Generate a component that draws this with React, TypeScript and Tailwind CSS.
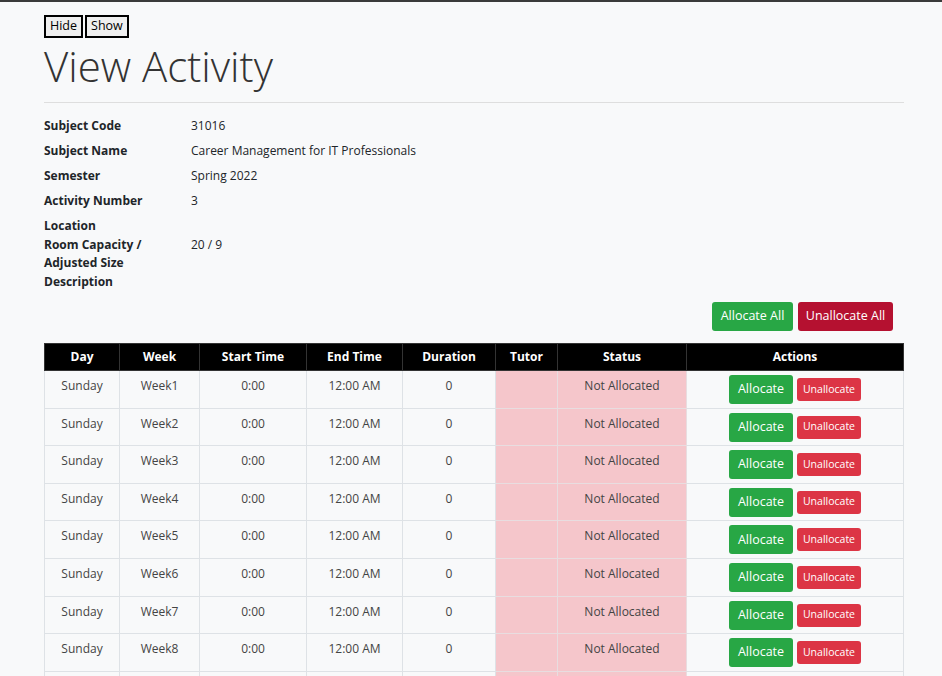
import React from 'react';

const info: [string, string][] = [
  ['Subject Code', '31016'],
  ['Subject Name', 'Career Management for IT Professionals'],
  ['Semester', 'Spring 2022'],
  ['Activity Number', '3'],
];

const cols = [
  { label: 'Day', w: 'w-[75px]' },
  { label: 'Week', w: 'w-[80px]' },
  { label: 'Start Time', w: 'w-[107px]' },
  { label: 'End Time', w: 'w-[96px]' },
  { label: 'Duration', w: 'w-[93px]' },
  { label: 'Tutor', w: 'w-[62px]' },
  { label: 'Status', w: 'w-[129px]' },
  { label: 'Actions', w: '' },
];

const weeks = [1, 2, 3, 4, 5, 6, 7, 8, 9];

export default function App() {
  return (
    <div className="min-h-[676px] border-t-2 border-[#3a3a3a] bg-[#f8f9fa] font-['Open_Sans',sans-serif] text-[12px] text-[#212529]">
      <div className="ml-[44px] w-[860px] pt-[13px]">
        <div className="flex gap-[2px]">
          <button className="h-[23px] border-2 border-black bg-[#efefef] px-[4px] text-[12.5px] leading-none text-black">Hide</button>
          <button className="h-[23px] border-2 border-black bg-[#efefef] px-[4px] text-[12.5px] leading-none text-black">Show</button>
        </div>
        <h1 className="mt-[2px] text-[42px] font-light leading-[52px] text-[#333]">View Activity</h1>
        <hr className="mt-[10px] border-t border-[#dedede]" />

        {/* subject details */}
        <div className="mt-[14px] grid grid-cols-[147px_1fr]">
          {info.map(([k, v]) => (
            <React.Fragment key={k}>
              <div className="h-[25px] font-bold leading-[18px]">{k}</div>
              <div className="h-[25px] leading-[18px]">{v}</div>
            </React.Fragment>
          ))}
          <div className="font-bold leading-[18.5px]">Location</div>
          <div />
          <div className="font-bold leading-[18.5px]">
            Room Capacity /<br />
            Adjusted Size
          </div>
          <div className="leading-[18.5px]">20 / 9</div>
          <div className="font-bold leading-[18.5px]">Description</div>
          <div />
        </div>

        <div className="mt-[11px] flex justify-end gap-[5px] pr-[11px]">
          <button className="h-[29px] w-[81px] rounded-[3px] bg-[#28a745] text-[12.5px] text-white">Allocate All</button>
          <button className="h-[29px] w-[95px] rounded-[3px] bg-[#b51130] text-[12.5px] text-white">Unallocate All</button>
        </div>

        <table className="mt-[12px] w-[860px] table-fixed border-collapse text-center">
          <thead>
            <tr className="bg-black text-white">
              {cols.map((c) => (
                <th key={c.label} className={`${c.w} h-[27px] border border-[#333] text-[12px] font-bold`}>
                  {c.label}
                </th>
              ))}
            </tr>
          </thead>
          <tbody>
            {weeks.map((n) => (
              <tr key={n} className="h-[37.6px] text-[#444]">
                <td className="border border-[#dee2e6] pt-[6px] align-top">Sunday</td>
                <td className="border border-[#dee2e6] pt-[6px] align-top">Week{n}</td>
                <td className="border border-[#dee2e6] pt-[6px] align-top">0:00</td>
                <td className="border border-[#dee2e6] pt-[6px] align-top">12:00 AM</td>
                <td className="border border-[#dee2e6] pt-[6px] align-top">0</td>
                <td className="border border-[#e8dde0] bg-[#f5c6cb]"></td>
                <td className="border border-[#e8dde0] bg-[#f5c6cb] pt-[6px] align-top">Not Allocated</td>
                <td className="border border-[#dee2e6] pt-[4px] pb-[3px] align-top">
                  <div className="flex items-center justify-center gap-[4px]">
                    <button className="h-[29px] w-[64px] rounded-[3px] bg-[#28a745] text-[12.5px] text-white">Allocate</button>
                    <button className="h-[23px] w-[64px] rounded-[3px] bg-[#dc3545] text-[10.5px] text-white">Unallocate</button>
                  </div>
                </td>
              </tr>
            ))}
          </tbody>
        </table>
      </div>
    </div>
  );
}
